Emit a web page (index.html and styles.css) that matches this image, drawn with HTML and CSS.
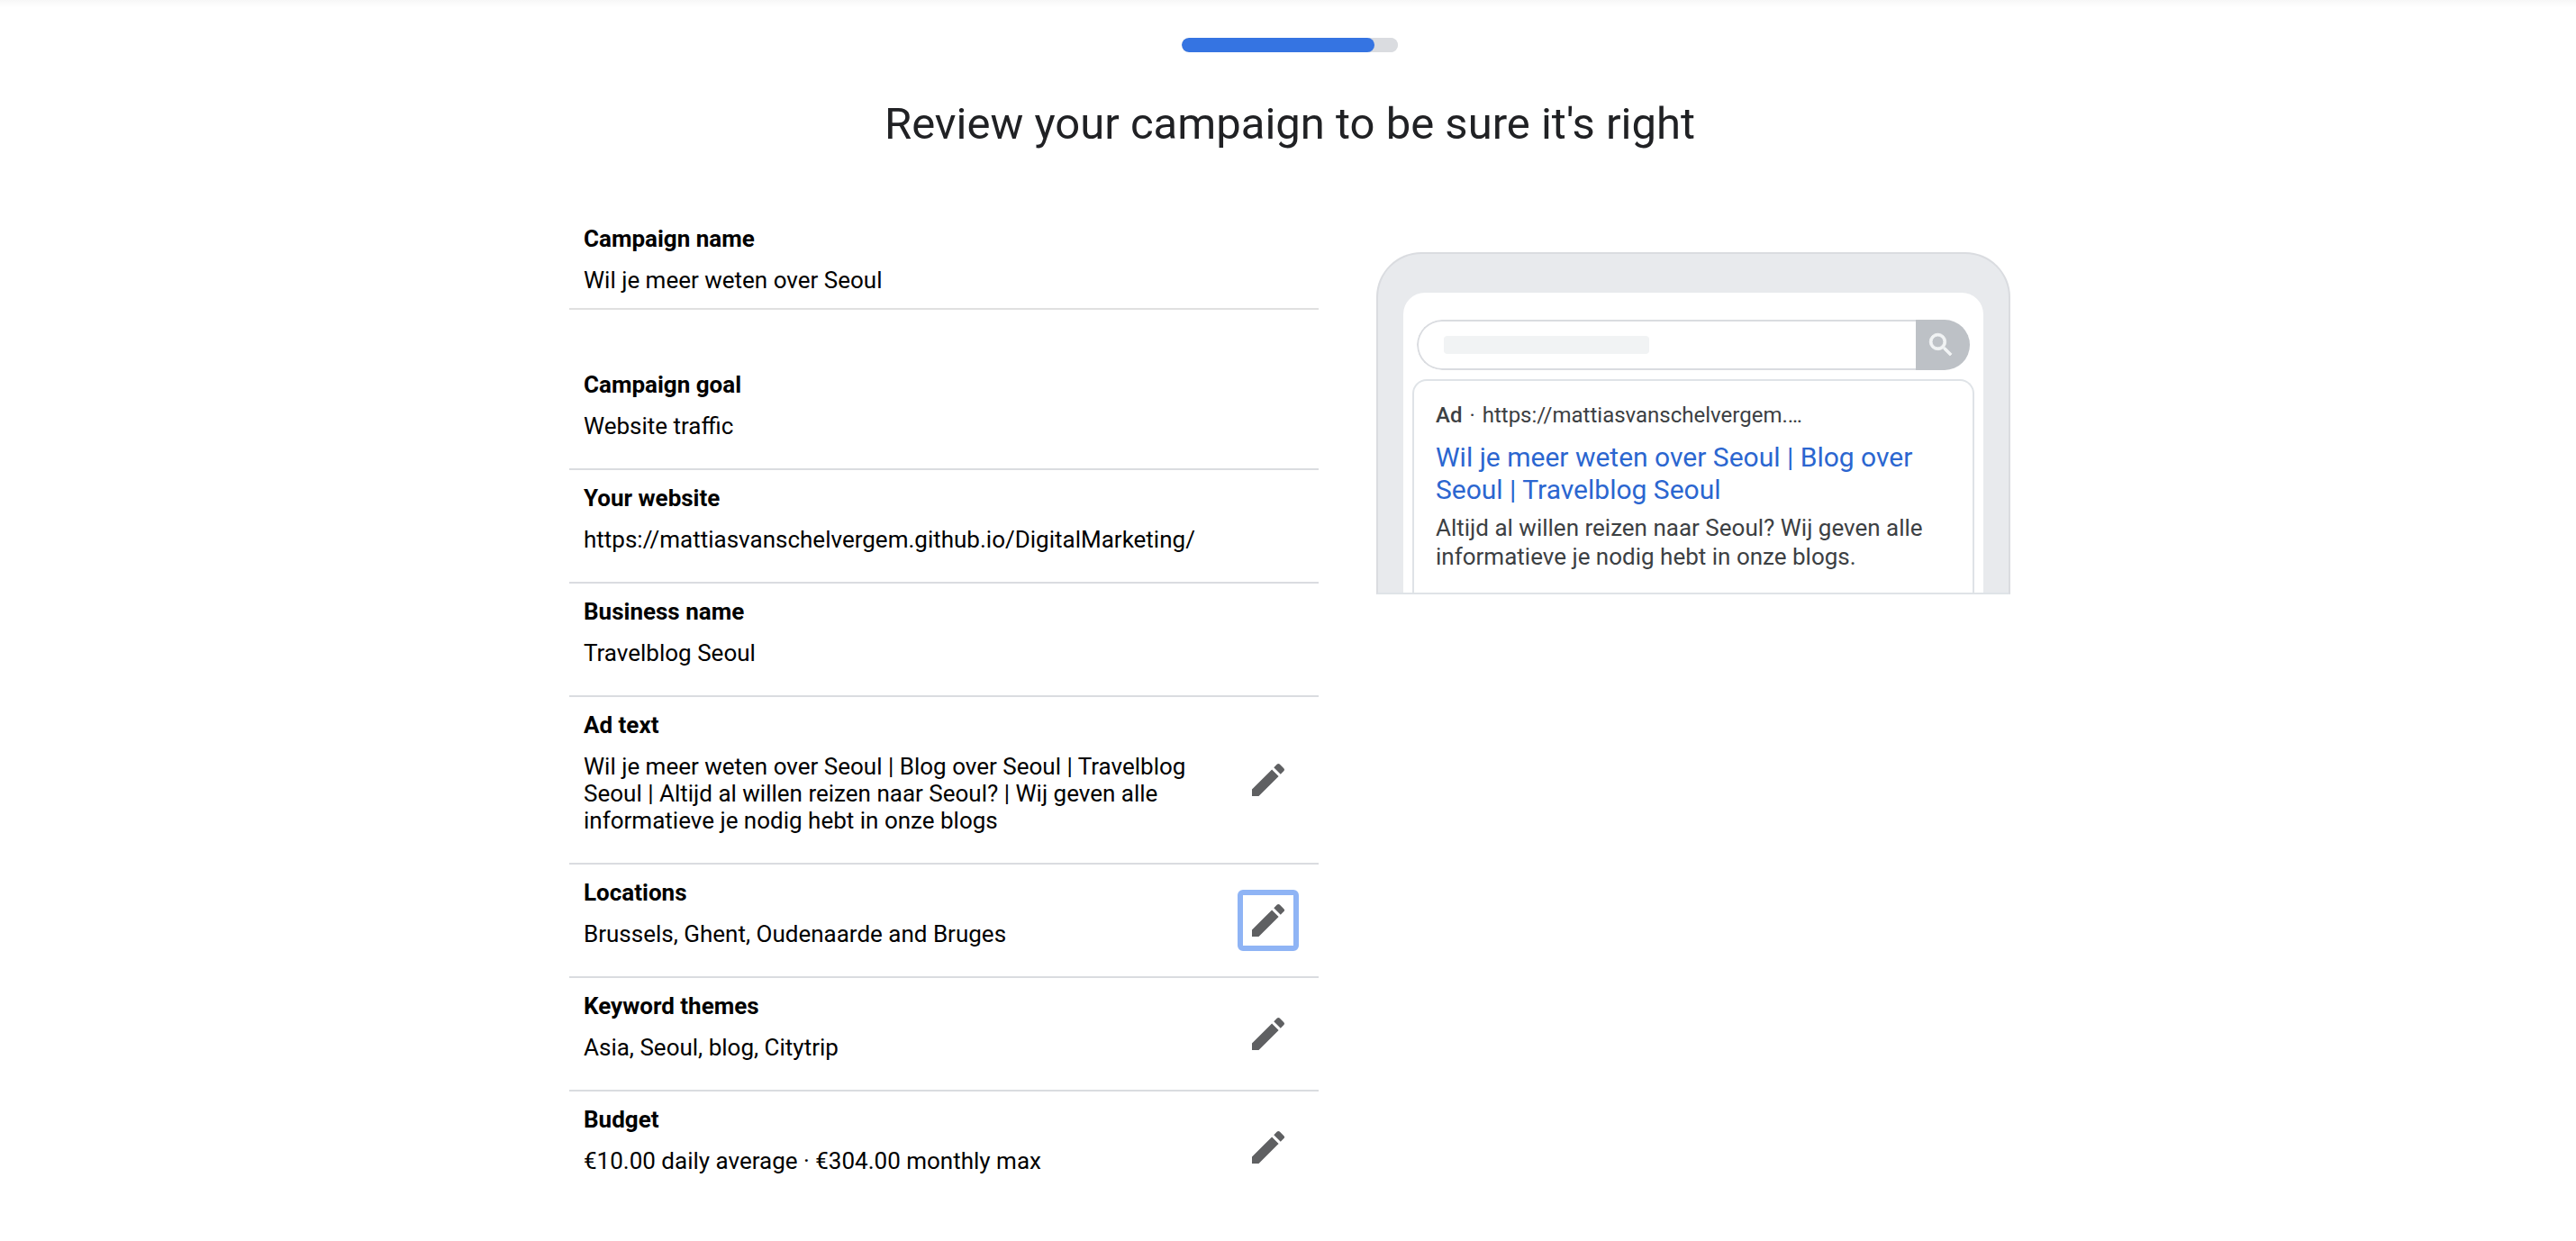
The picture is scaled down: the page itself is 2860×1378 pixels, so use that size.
FILE: index.html
```html
<!DOCTYPE html>
<html lang="en">
<head>
<meta charset="utf-8">
<meta name="viewport" content="width=device-width, initial-scale=1">
<title>Review your campaign</title>
<link rel="stylesheet" href="styles.css">
</head>
<body>
<svg class="sprite" aria-hidden="true">
  <symbol id="edit" viewBox="0 0 24 24"><path d="M3 17.25V21h3.75L17.81 9.94l-3.75-3.75L3 17.25zM20.71 7.04a1 1 0 0 0 0-1.41l-2.34-2.34a1 1 0 0 0-1.41 0l-1.83 1.83 3.75 3.75 1.83-1.83z"/></symbol>
  <symbol id="search" viewBox="0 0 24 24"><path d="M15.5 14h-.79l-.28-.27A6.47 6.47 0 0 0 16 9.5 6.5 6.5 0 1 0 9.5 16c1.61 0 3.09-.59 4.23-1.57l.27.28v.79l5 4.99L20.49 19l-4.99-5zm-6 0a4.5 4.5 0 1 1 0-9 4.5 4.5 0 0 1 0 9z"/></symbol>
</svg>
<main class="page">
  <progress class="steps" value="89" max="100" aria-label="Setup progress"></progress>
  <h1 class="title">Review your campaign to be sure it's right</h1>
  <div class="columns">
    <div class="review">
      <section class="row row-name">
        <div class="row-text"><h2 class="label">Campaign name</h2><p class="value">Wil je meer weten over Seoul</p></div>
      </section>
      <section class="row">
        <div class="row-text"><h2 class="label">Campaign goal</h2><p class="value">Website traffic</p></div>
      </section>
      <section class="row">
        <div class="row-text"><h2 class="label">Your website</h2><p class="value">https://mattiasvanschelvergem.github.io/DigitalMarketing/</p></div>
      </section>
      <section class="row">
        <div class="row-text"><h2 class="label">Business name</h2><p class="value">Travelblog Seoul</p></div>
      </section>
      <section class="row">
        <div class="row-text"><h2 class="label">Ad text</h2><p class="value">Wil je meer weten over Seoul | Blog over Seoul | Travelblog Seoul | Altijd al willen reizen naar Seoul? | Wij geven alle informatieve je nodig hebt in onze blogs</p></div>
        <button class="edit" type="button" aria-label="Edit ad text"><svg class="edit-icon"><use href="#edit"/></svg></button>
      </section>
      <section class="row">
        <div class="row-text"><h2 class="label">Locations</h2><p class="value">Brussels, Ghent, Oudenaarde and Bruges</p></div>
        <button class="edit edit-focused" type="button" aria-label="Edit locations"><svg class="edit-icon"><use href="#edit"/></svg></button>
      </section>
      <section class="row">
        <div class="row-text"><h2 class="label">Keyword themes</h2><p class="value">Asia, Seoul, blog, Citytrip</p></div>
        <button class="edit" type="button" aria-label="Edit keyword themes"><svg class="edit-icon"><use href="#edit"/></svg></button>
      </section>
      <section class="row">
        <div class="row-text"><h2 class="label">Budget</h2><p class="value">€10.00 daily average · €304.00 monthly max</p></div>
        <button class="edit" type="button" aria-label="Edit budget"><svg class="edit-icon"><use href="#edit"/></svg></button>
      </section>
    </div>
    <aside class="phone" aria-label="Ad preview">
      <div class="screen">
        <div class="search">
          <div class="search-field"><span class="search-skeleton"></span></div>
          <button class="search-button" type="button" aria-label="Search"><svg class="search-icon"><use href="#search"/></svg></button>
        </div>
        <article class="ad">
          <p class="ad-source"><span class="ad-badge">Ad</span><span>·</span><span>https://mattiasvanschelvergem.…</span></p>
          <a class="ad-headline" href="https://mattiasvanschelvergem.github.io/DigitalMarketing/">Wil je meer weten over Seoul | Blog over Seoul | Travelblog Seoul</a>
          <p class="ad-description">Altijd al willen reizen naar Seoul? Wij geven alle informatieve je nodig hebt in onze blogs.</p>
        </article>
      </div>
    </aside>
  </div>
</main>
</body>
</html>
```

FILE: styles.css
```css
* { box-sizing: border-box; }

body {
  margin: 0;
  background: #fff linear-gradient(#f7f7f7, #fff) top / 100% 8px no-repeat;
  color: #000;
  font-family: Roboto, "Liberation Sans", sans-serif;
  font-size: 26px;
  line-height: 30px;
}

h1, h2, p { margin: 0; }

.sprite { display: none; }

.page {
  display: flex;
  flex-direction: column;
  align-items: center;
  padding: 42px 16px 0 20px;
}

.steps {
  appearance: none;
  display: block;
  width: 240px;
  height: 16px;
  border: 0;
  border-radius: 8px;
  overflow: hidden;
  background: #dadce0;
}
.steps::-webkit-progress-bar { background: #dadce0; border-radius: 8px; }
.steps::-webkit-progress-value { background: #3574e2; border-radius: 8px; }

.title {
  margin-top: 48px;
  color: #202124;
  font-size: 49px;
  font-weight: 400;
  line-height: 64px;
  text-align: center;
}

.columns {
  display: grid;
  grid-template-columns: 832fr 704fr;
  gap: 64px;
  align-items: start;
  width: 100%;
  max-width: 1600px;
  margin-top: 64px;
}

.row {
  display: flex;
  align-items: center;
  gap: 16px;
  padding: 0 22px 0 16px;
  border-bottom: 2px solid #dadce0;
}
.row:last-child { border-bottom: 0; }

.row-text { flex: 1; padding: 16px 0 32px; }

.row-name { margin-bottom: 52px; border-color: #e0e0e0; }
.row-name .row-text { padding-bottom: 16px; }

.label { font-size: 26px; font-weight: 700; line-height: 30px; }
.value { margin-top: 16px; }

.edit {
  display: grid;
  place-items: center;
  width: 68px;
  height: 68px;
  padding: 0;
  border: 6px solid transparent;
  border-radius: 6px;
  background: none;
}
.edit-focused { border-color: #8fb4f5; }
.edit-icon { width: 48px; height: 48px; fill: #5f6062; }

.phone {
  margin-top: 46px;
  padding: 43px 28px 0;
  border: 2px solid #dadce0;
  border-bottom-color: #dfe3e7;
  border-radius: 50px 50px 0 0;
  background: #e8eaed;
}

.screen {
  padding: 30px 10px 0;
  border-radius: 24px 24px 0 0;
  background: #fff;
}

.search {
  display: flex;
  height: 56px;
  margin: 0 5px;
  border-radius: 28px;
  overflow: hidden;
}
.search-field {
  display: flex;
  flex: 1;
  align-items: center;
  padding-left: 28px;
  border: 2px solid #dadce0;
  border-right: 0;
  border-radius: 28px 0 0 28px;
}
.search-skeleton {
  width: 228px;
  height: 20px;
  border-radius: 4px;
  background: #f1f3f4;
}
.search-button {
  display: grid;
  place-items: center;
  width: 60px;
  padding: 0 4px 0 0;
  border: 0;
  background: #bdc1c6;
}
.search-icon {
  width: 34px;
  height: 34px;
  fill: #f1f3f4;
  stroke: #f1f3f4;
  stroke-width: 0.6;
}

.ad {
  margin-top: 10px;
  padding: 22px 24px 24px;
  border: 2px solid #dfe3e7;
  border-bottom: 0;
  border-radius: 16px 16px 0 0;
  color: #3c4043;
}
.ad-source {
  display: flex;
  gap: 8px;
  font-size: 24px;
  line-height: 32px;
}
.ad-badge { font-weight: 500; }
.ad-headline {
  display: block;
  margin-top: 13px;
  color: #2b66d0;
  font-size: 30px;
  line-height: 36px;
  text-decoration: none;
}
.ad-description { margin-top: 8px; line-height: 32px; }
```
